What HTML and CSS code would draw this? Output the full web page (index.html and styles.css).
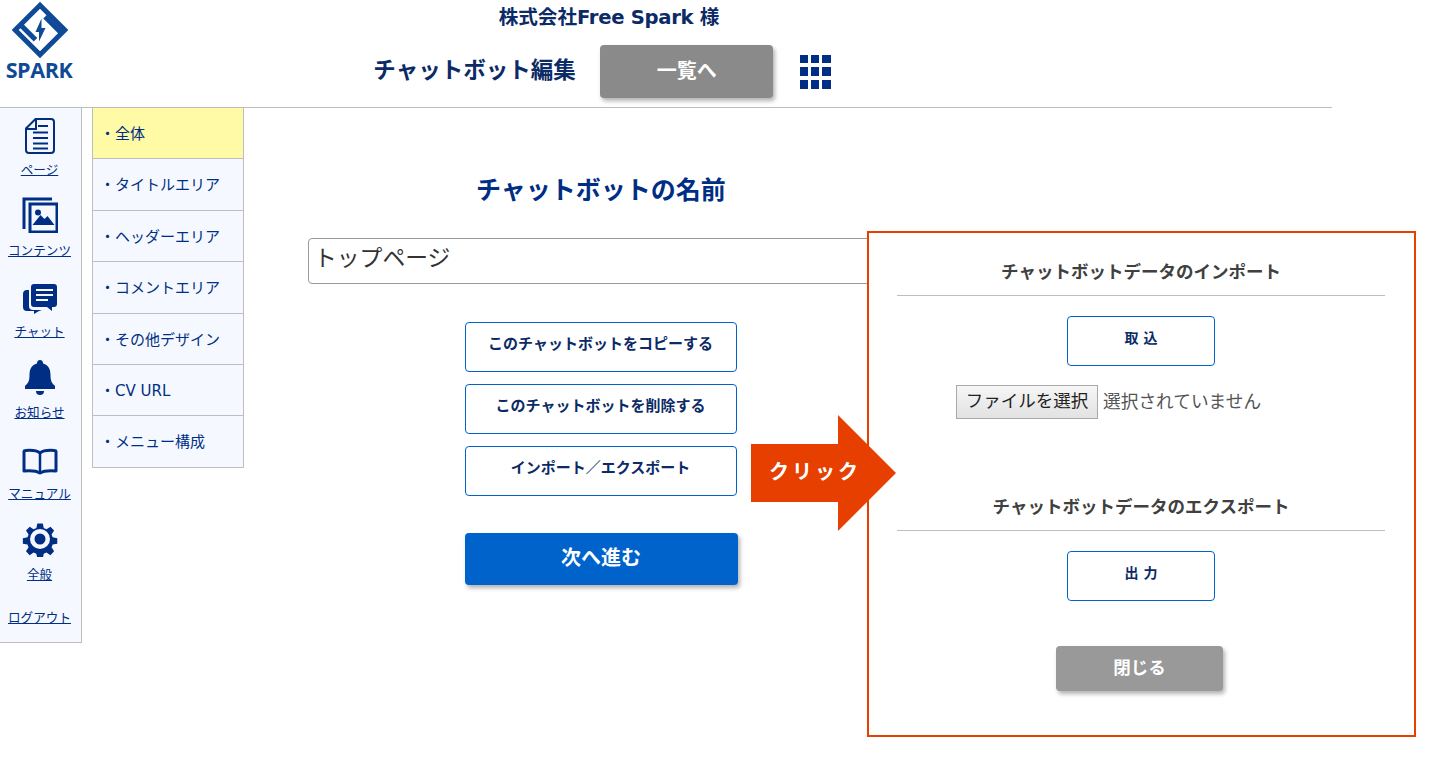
FILE: index.html
```html
<!DOCTYPE html>
<html lang="ja">
<head>
<meta charset="utf-8">
<title>チャットボット編集</title>
<link rel="stylesheet" href="styles.css">
</head>
<body>
<div class="page">
  <header class="header">
    <a class="logo" href="#">
      <svg class="logo-mark" width="60" height="60" viewBox="10 0 60 60" aria-hidden="true">
        <path d="M40 5.200 L64.800 30 L40 54.800 L15.200 30 Z" fill="none" stroke="#0f4a97" stroke-width="5"/>
        <path d="M20.700 25 L35.500 39.800" fill="none" stroke="#0f4a97" stroke-width="5"/>
        <path d="M45 16.700 L61.500 33.300" fill="none" stroke="#0f4a97" stroke-width="5"/>
        <path fill="#0f4a97" d="M35.500 32 L41.500 18.500 L41.500 28 L45.500 28 L39 41.500 L39 32 Z"/>
      </svg>
      <span class="logo-text">SPARK</span>
    </a>
    <div class="header-center">
      <p class="company">株式会社<span class="company-latin">Free Spark </span>様</p>
      <div class="header-row">
        <h1 class="page-title">チャットボット編集</h1>
        <a class="btn-list" href="#">一覧へ</a>
        <div class="app-grid" aria-hidden="true"><i></i><i></i><i></i><i></i><i></i><i></i><i></i><i></i><i></i></div>
      </div>
    </div>
  </header>
  <div class="body-row">
    <nav class="sidebar">
      <a class="side-item side-first" href="#">
        <svg class="side-icon" width="34" height="38" viewBox="0 0 34 38" aria-hidden="true"><path d="M12.500 2H28a3 3 0 0 1 3 3v28a3 3 0 0 1-3 3H6a3 3 0 0 1-3-3V11.500Z" fill="none" stroke="#002e85" stroke-width="2"/><path d="M13 2.500V12H3.500" fill="none" stroke="#002e85" stroke-width="2"/><path d="M15 9h10M10 15.500h15M10 21h15M10 26.500h15M10 31.500h15" stroke="#002e85" stroke-width="2"/></svg>
        <span>ページ</span>
      </a>
      <a class="side-item" href="#">
        <svg class="side-icon" width="36" height="36" viewBox="0 0 36 36" aria-hidden="true"><path d="M30 2H2v30" fill="none" stroke="#002e85" stroke-width="3"/><path d="M8 7h27v28H8z" fill="none" stroke="#002e85" stroke-width="3"/><circle cx="16" cy="15.500" r="3" fill="#002e85"/><path d="M10.500 28l8-10 4 4 3-3 7 9z" fill="#002e85"/></svg>
        <span>コンテンツ</span>
      </a>
      <a class="side-item" href="#">
        <svg class="side-icon" width="36" height="32" viewBox="0 0 36 32" aria-hidden="true"><path d="M12 2h20a3 3 0 0 1 3 3v17a3 3 0 0 1-3 3h-2v4l-5-4H12a3 3 0 0 1-3-3V5a3 3 0 0 1 3-3z" fill="#002e85"/><path d="M7 8v16a4 4 0 0 0 4 4h9l-3 1-5 3 0-3H5a4 4 0 0 1-4-4V12a4 4 0 0 1 4-4z" fill="#002e85"/><path d="M14 8h17M14 13h17M14 18h12" stroke="#f5f9ff" stroke-width="2"/></svg>
        <span>チャット</span>
      </a>
      <a class="side-item" href="#">
        <svg class="side-icon" width="32" height="36" viewBox="0 0 32 36" aria-hidden="true"><path d="M16 1a3 3 0 0 1 3 3.500c6 1.500 7.500 6.500 7.500 11.500 0 7 2 8.500 4.500 11v3H1v-3c2.500-2.500 4.500-4 4.500-11 0-5 1.500-10 7.500-11.500A3 3 0 0 1 16 1z" fill="#002e85"/><path d="M12 32h8a4 4 0 0 1-8 0z" fill="#002e85"/></svg>
        <span>お知らせ</span>
      </a>
      <a class="side-item" href="#">
        <svg class="side-icon" width="36" height="28" viewBox="0 0 36 28" aria-hidden="true"><path d="M18 5C15 2.500 9 2 3.500 2.500A1.500 1.500 0 0 0 2 4v19c6-.5 12-.5 16 2 4-2.500 10-2.500 16-2V4a1.500 1.500 0 0 0-1.500-1.500C27 2 21 2.500 18 5z" fill="none" stroke="#002e85" stroke-width="3" stroke-linejoin="round"/><path d="M18 5v20" stroke="#002e85" stroke-width="2.500"/></svg>
        <span>マニュアル</span>
      </a>
      <a class="side-item" href="#">
        <svg class="side-icon" width="36" height="36" viewBox="0 0 36 36" aria-hidden="true"><path d="M15 1h6l1 5 3 1.300 4.300-2.800 4 4.300-2.800 4.200 1.200 3 5 1v6l-5 1-1.200 3 2.800 4.200-4 4.300-4.300-2.800-3 1.300-1 5h-6l-1-5-3-1.300-4.300 2.800-4-4.300 2.800-4.200-1.200-3-5-1v-6l5-1 1.200-3L2.700 8.800l4-4.300L11 7.300 14 6z" fill="#002e85" transform="translate(1.500 1.500) scale(.92)"/><circle cx="18" cy="18" r="10" fill="#f5f9ff"/><circle cx="18" cy="18" r="5.500" fill="#002e85"/></svg>
        <span>全般</span>
      </a>
      <a class="side-item side-logout" href="#"><span>ログアウト</span></a>
    </nav>
    <ul class="submenu">
      <li class="submenu-item is-active"><a href="#">全体</a></li>
      <li class="submenu-item"><a href="#">タイトルエリア</a></li>
      <li class="submenu-item"><a href="#">ヘッダーエリア</a></li>
      <li class="submenu-item"><a href="#">コメントエリア</a></li>
      <li class="submenu-item"><a href="#">その他デザイン</a></li>
      <li class="submenu-item"><a href="#">CV URL</a></li>
      <li class="submenu-item"><a href="#">メニュー構成</a></li>
    </ul>
    <main class="main">
      <h2 class="name-title">チャットボットの名前</h2>
      <input class="name-input" type="text" value="トップページ">
      <div class="actions">
        <a class="btn-outline" href="#">このチャットボットをコピーする</a>
        <a class="btn-outline" href="#">このチャットボットを削除する</a>
        <a class="btn-outline" href="#">インポート／エクスポート</a>
        <a class="btn-next" href="#">次へ進む</a>
      </div>
    </main>
  </div>
</div>
<section class="panel">
  <h3 class="panel-title">チャットボットデータのインポート</h3>
  <a class="btn-small" href="#">取 込</a>
  <div class="file-row"><span class="file-btn">ファイルを選択</span><span class="file-status">選択されていません</span></div>
  <h3 class="panel-title panel-title-export">チャットボットデータのエクスポート</h3>
  <a class="btn-small" href="#">出 力</a>
  <a class="btn-close" href="#">閉じる</a>
</section>
<div class="callout"><span>クリック</span></div>
</body>
</html>
```
FILE: styles.css
```css
* { box-sizing: border-box; }
html, body { margin: 0; padding: 0; }
body {
  background: #fff;
  color: #002e85;
  font-family: "DejaVu Sans", "Noto Sans CJK JP", sans-serif;
  height: 771px;
  overflow: hidden;
  position: relative;
}
a { color: inherit; text-decoration: none; }
.page { width: 1332px; }

.header {
  display: flex;
  height: 108px;
  border-bottom: 1px solid #bdbdbd;
}
.logo {
  width: 80px;
  display: flex;
  flex-direction: column;
  align-items: center;
}
.logo-mark { display: block; flex: none; }
.logo-text {
  font-family: "Open Sans", sans-serif;
  font-weight: 700;
  font-size: 21.500px;
  line-height: 22px;
  color: #0f4a97;
  letter-spacing: -.4px;
  margin: -1px 2px 0 0;
}
.header-center {
  width: 1058px;
  display: flex;
  flex-direction: column;
  align-items: center;
}
.company {
  margin: 5px 0 0;
  font-size: 19.600px;
  line-height: 26px;
  font-weight: 700;
  color: #0b2a66;
}
.company-latin { letter-spacing: -.3px; }
.header-row {
  display: flex;
  align-items: center;
  margin-top: 14px;
  padding-right: 14px;
}
.page-title {
  margin: 0 24px 7px 0;
  font-size: 22.500px;
  font-weight: 700;
  color: #0b2a66;
}
.btn-list {
  width: 173px;
  height: 53px;
  display: flex;
  align-items: center;
  justify-content: center;
  padding: 0 0 5px 1px;
  background: #8a8a8a;
  border-radius: 4px;
  color: #fff;
  font-weight: 700;
  font-size: 20px;
  box-shadow: 2px 3px 4px rgba(0,0,0,.3);
  margin-right: 27px;
}
.app-grid {
  width: 31px;
  height: 34px;
  display: grid;
  grid-template-columns: repeat(3, 8.500px);
  grid-template-rows: repeat(3, 8.500px);
  justify-content: space-between;
  align-content: space-between;
}
.app-grid i { background: #002e85; }

.body-row { display: flex; align-items: flex-start; }

.sidebar {
  width: 82px;
  height: 535px;
  background: #f5f9ff;
  border-right: 1px solid #bdbdbd;
  border-bottom: 1px solid #bdbdbd;
  display: flex;
  flex-direction: column;
  align-items: center;
  padding: 12px 2px 0 0;
}
.side-item {
  height: 81px;
  display: flex;
  flex-direction: column;
  align-items: center;
  justify-content: flex-end;
  padding-bottom: 12px;
  font-size: 12.600px;
  line-height: 18px;
  flex: none;
}
.side-first { height: 71px; }
.side-item span { text-decoration: underline; }
.side-icon { display: block; margin-bottom: 9px; flex: none; }
.side-first .side-icon { margin-bottom: 6px; }
.side-logout { height: 43px; }

.submenu {
  list-style: none;
  margin: 0 0 0 10px;
  padding: 0;
  width: 152px;
  border: 1px solid #bdbdbd;
  border-top: none;
  background: #f5f9ff;
  flex: none;
}
.submenu-item {
  height: 51.400px;
  display: flex;
  align-items: center;
  padding: 0 0 1.500px 7px;
  font-size: 15px;
  border-bottom: 1px solid #bdbdbd;
}
.submenu-item:last-child { height: 50.600px; border-bottom: none; }
.submenu-item a::before { content: "・"; }
.is-active { background: #fffaa5; }

.main {
  width: 586px;
  margin-left: 64px;
  display: flex;
  flex-direction: column;
  align-items: center;
}
.name-title {
  margin: 62px 0 0;
  font-size: 25px;
  line-height: 42px;
  font-weight: 700;
}
.name-input {
  width: 586px;
  height: 46px;
  margin-top: 26px;
  border: 1px solid #999;
  border-radius: 4px;
  padding: 0 5px 9px;
  font-family: "Noto Sans CJK JP", sans-serif;
  font-size: 22.800px;
  color: #333;
  background: #fff;
}
.actions {
  width: 273px;
  margin-top: 38px;
  display: flex;
  flex-direction: column;
  gap: 12px;
  align-items: flex-start;
}
.btn-outline {
  width: 272px;
  height: 50px;
  border: 1px solid #0063cc;
  border-radius: 4px;
  text-align: center;
  font-size: 15px;
  font-weight: 700;
  line-height: 42px;
  color: #0b2a66;
  background: #fff;
}
.btn-next {
  width: 273px;
  height: 52px;
  margin-top: 25px;
  display: flex;
  align-items: center;
  justify-content: center;
  padding-bottom: 6px;
  background: #0063cc;
  color: #fff;
  font-size: 20px;
  font-weight: 700;
  border-radius: 4px;
  box-shadow: 2px 3px 4px rgba(0,0,0,.3);
}

.panel {
  position: absolute;
  left: 867px;
  top: 231px;
  width: 549px;
  height: 506px;
  background: #fff;
  border: 2px solid #e63f00;
  padding: 0 29px 0 28px;
  display: flex;
  flex-direction: column;
  align-items: center;
}
.panel-title {
  width: 100%;
  margin: 22px 0 0;
  height: 41px;
  line-height: 34px;
  border-bottom: 1px solid #bdbdbd;
  text-align: center;
  font-size: 17.500px;
  font-weight: 700;
  color: #404040;
}
.panel-title-export { margin-top: 71px; }
.btn-small {
  width: 148px;
  height: 50px;
  margin-top: 20px;
  border: 1px solid #0063cc;
  border-radius: 4px;
  text-align: center;
  font-size: 14px;
  font-weight: 700;
  line-height: 42px;
  color: #0b2a66;
  background: #fff;
}
.file-row {
  align-self: flex-start;
  margin: 19px 0 0 59px;
  display: flex;
  align-items: center;
}
.file-btn {
  width: 142px;
  height: 34px;
  display: flex;
  align-items: center;
  justify-content: center;
  padding-bottom: 5px;
  border: 1px solid #a9a9a9;
  background: linear-gradient(#f6f6f6, #e2e2e2);
  font-size: 17.500px;
  color: #222;
}
.file-status {
  margin: 0 0 4px 5px;
  font-size: 17.700px;
  color: #555;
}
.btn-close {
  width: 167px;
  height: 45px;
  margin-top: 45px;
  margin-left: -3px;
  display: flex;
  align-items: center;
  justify-content: center;
  padding-bottom: 4px;
  background: #999;
  color: #fff;
  font-size: 17.500px;
  font-weight: 700;
  border-radius: 4px;
  box-shadow: 2px 3px 4px rgba(0,0,0,.3);
}

.callout {
  position: absolute;
  left: 751px;
  top: 415px;
  width: 145px;
  height: 116px;
  background: #e63f00;
  clip-path: polygon(0 29px, 87px 29px, 87px 0, 145px 58px, 87px 116px, 87px 87px, 0 87px);
  display: flex;
  align-items: center;
  padding: 0 0 6px 18px;
}
.callout span {
  color: #fff;
  font-size: 20px;
  font-weight: 700;
  letter-spacing: 3px;
}
```
